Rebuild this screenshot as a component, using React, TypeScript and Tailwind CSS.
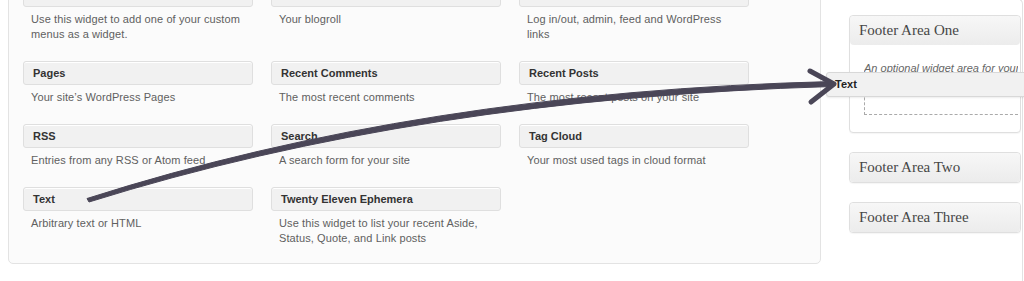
import React from "react";

interface Widget {
  title: string;
  description: string;
}

// the available widgets list (first row is scrolled off the top)
const widgets: Widget[] = [
  { title: "Custom Menu", description: "Use this widget to add one of your custom menus as a widget." },
  { title: "Links", description: "Your blogroll" },
  { title: "Meta", description: "Log in/out, admin, feed and WordPress links" },
  { title: "Pages", description: "Your site\u2019s WordPress Pages" },
  { title: "Recent Comments", description: "The most recent comments" },
  { title: "Recent Posts", description: "The most recent posts on your site" },
  { title: "RSS", description: "Entries from any RSS or Atom feed" },
  { title: "Search", description: "A search form for your site" },
  { title: "Tag Cloud", description: "Your most used tags in cloud format" },
  { title: "Text", description: "Arbitrary text or HTML" },
  { title: "Twenty Eleven Ephemera", description: "Use this widget to list your recent Aside, Status, Quote, and Link posts" },
];

const WidgetItem = ({ widget }: { widget: Widget }) => (
  <div>
    <div className="h-[24px] flex items-center pl-[9px] bg-[#f1f1f1] border border-[#dfdfdf] rounded-[3px] shadow-[0_1px_0_#fff_inset] text-[11px] font-bold text-[#333]">
      {widget.title}
    </div>
    <p className="mt-[5px] pl-[8px] pr-[10px] text-[11px] tracking-[0.1px] leading-[15px] text-[#606060]">
      {widget.description}
    </p>
  </div>
);

const SidebarBox = ({ title, children }: { title: string; children?: React.ReactNode }) => (
  <div className="border border-[#dfdfdf] rounded-[4px] bg-white shadow-[0_1px_1px_rgba(0,0,0,0.04)]">
    <div className="h-[29px] flex items-center pl-[9px] bg-gradient-to-b from-[#f7f7f7] to-[#ececec] rounded-[4px] font-['Liberation_Serif',serif] text-[15px] text-[#464646] whitespace-nowrap overflow-hidden">
      {title}
    </div>
    {children}
  </div>
);

const App = () => {
  return (
    <div className="relative w-[1024px] h-[281px] overflow-hidden bg-white font-['Liberation_Sans',Arial,sans-serif]">
      <div className="flex items-start">
        {/* Available widgets panel */}
        <div className="ml-[8px] w-[813px] -mt-[40px] pt-[22px] pb-[17px] pl-[14px] bg-[#fbfbfb] border border-[#e3e3e3] rounded-[5px]">
          <div className="grid grid-cols-[230px_230px_230px] gap-x-[18px] gap-y-[19px]">
            {widgets.map((w) => (
              <WidgetItem key={w.title} widget={w} />
            ))}
          </div>
        </div>

        {/* Sidebars column */}
        <div className="w-[202px] h-[290px] -mt-[2px] pt-[16px] pl-[28px] pr-[1px] border-r border-t border-[#e2e2e2] rounded-tr-[6px] flex flex-col gap-[19px]">
          <SidebarBox title="Footer Area One">
            <div className="pt-[16px] pb-[17px] pl-[14px] pr-[2px]">
              <p className="text-[11px] leading-[15px] italic text-[#666] whitespace-nowrap overflow-hidden">
                An optional widget area for your footer
              </p>
              <div className="mt-[2px] h-[37px] border border-dashed border-[#aaa] border-r-0" />
            </div>
          </SidebarBox>
          <SidebarBox title="Footer Area Two" />
          <SidebarBox title="Footer Area Three" />
        </div>
      </div>

      {/* widget being dragged */}
      <div className="absolute left-[826px] top-[72px] w-[220px] h-[25px] flex items-center pl-[8px] bg-[#f1f1f1] border border-[#d8d8d8] rounded-[3px] shadow-[0_1px_2px_rgba(0,0,0,0.08)] text-[11px] font-bold text-[#222]">
        Text
      </div>

      {/* hand drawn arrow */}
      <svg className="absolute left-0 top-0" width="1024" height="281" viewBox="0 0 1024 281">
        <path
          d="M 87 198.5 Q 420 92 832 81.5 L 832 86.5 Q 420 98.5 89 202 Z"
          fill="#4a4657"
          stroke="#4a4657"
          strokeWidth="1"
          strokeLinejoin="round"
        />
        <path
          d="M 810 71 L 834 84 L 811 102"
          fill="none"
          stroke="#4a4657"
          strokeWidth="5"
          strokeLinecap="round"
          strokeLinejoin="round"
        />
      </svg>
    </div>
  );
};

export default App;
